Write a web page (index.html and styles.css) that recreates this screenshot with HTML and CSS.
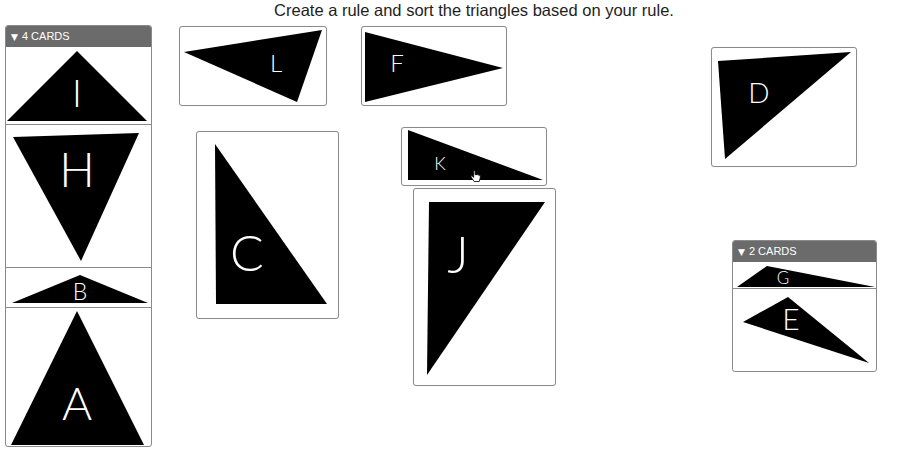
FILE: index.html
```html
<!DOCTYPE html>
<html>
<head>
<meta charset="utf-8">
<title>Triangle sort</title>
<link rel="stylesheet" href="styles.css">
</head>
<body>
<div class="board">
  <h1 class="title">Create a rule and sort the triangles based on your rule.</h1>

  <div class="stack stack-left">
    <div class="stack-head"><span class="caret">&#9660;</span>4 CARDS</div>
    <div class="slot slot-i">
      <svg width="145" height="77" viewBox="0 0 145 77"><polygon points="71,4 1,74 141,74"/><text x="71" y="60" font-size="38">I</text></svg>
    </div>
    <div class="slot slot-h">
      <svg width="145" height="142" viewBox="0 0 145 142"><polygon points="7,12 133,8 75,136"/><text x="71" y="62" font-size="47">H</text></svg>
    </div>
    <div class="slot slot-b">
      <svg width="145" height="39" viewBox="0 0 145 39"><polygon points="74,7 6,35 142,35"/><text x="74" y="32" font-size="23">B</text></svg>
    </div>
    <div class="slot slot-a">
      <svg width="145" height="138" viewBox="0 0 145 138"><polygon points="71,3 5,137 138,137"/><text x="71" y="112" font-size="46">A</text></svg>
    </div>
  </div>

  <div class="card card-l">
    <svg width="146" height="78" viewBox="1 1 146 78"><polygon points="5,26 143,4 118,76"/><text x="97" y="46" font-size="24">L</text></svg>
  </div>
  <div class="card card-f">
    <svg width="144" height="78" viewBox="1 1 144 78"><polygon points="4,6 4,76 142,42"/><text x="36" y="46" font-size="24">F</text></svg>
  </div>
  <div class="card card-c">
    <svg width="141" height="186" viewBox="1 1 141 186"><polygon points="19,13 20,173 131,173"/><text x="51" y="140" font-size="50">C</text></svg>
  </div>
  <div class="card card-k">
    <svg width="144" height="57" viewBox="1 1 144 57"><polygon points="7,3 7,53 142,53"/><text x="39" y="43" font-size="18">K</text></svg>
  </div>
  <div class="card card-j">
    <svg width="141" height="196" viewBox="1 1 141 196"><polygon points="16,14 132,14 14,187"/><text x="45" y="85" font-size="52">J</text></svg>
  </div>
  <div class="card card-d">
    <svg width="144" height="118" viewBox="1 1 144 118"><polygon points="7,14 140,5 14,112"/><text x="48" y="56" font-size="28">D</text></svg>
  </div>

  <div class="stack stack-right">
    <div class="stack-head"><span class="caret">&#9660;</span>2 CARDS</div>
    <div class="slot slot-g">
      <svg width="143" height="26" viewBox="0 0 143 26"><polygon points="34,4 4,25 142,25"/><text x="50" y="22" font-size="17">G</text></svg>
    </div>
    <div class="slot slot-e">
      <svg width="143" height="82" viewBox="0 0 143 82"><polygon points="55,8 10,33 136,74"/><text x="58" y="41" font-size="30">E</text></svg>
    </div>
  </div>

  <svg class="cursor" width="11" height="13" viewBox="0 0 12 14"><path d="M4 1 V8 L2.6 6.6 C1.8 5.8 0.6 6.8 1.3 7.7 L4.5 12.5 H10 L11.2 8.5 V6 C11.2 5.2 9.9 5.2 9.9 6 V5.5 C9.9 4.7 8.6 4.7 8.6 5.5 V5.1 C8.6 4.3 7.3 4.3 7.3 5.1 V5 H5.6 V1 C5.6 0.1 4 0.1 4 1 Z"/></svg>
</div>
</body>
</html>
```
FILE: styles.css
```css
html, body {
  margin: 0;
  padding: 0;
  background: #ffffff;
}

.board {
  position: relative;
  width: 900px;
  height: 450px;
  overflow: hidden;
  font-family: "Liberation Sans", Arial, sans-serif;
}

.title {
  margin: 0;
  padding: 1px 0 0 48px;
  font-size: 16.5px;
  font-weight: normal;
  line-height: 18px;
  color: #1e1e1e;
  text-align: center;
}

svg polygon {
  fill: #000000;
}

svg text {
  fill: #ffffff;
  font-family: "Lato", "Roboto", "Open Sans", sans-serif;
  font-weight: 300;
  text-anchor: middle;
}

.stack {
  position: absolute;
  display: flex;
  flex-direction: column;
  box-sizing: border-box;
  border: 1px solid #8a8a8a;
  border-radius: 3px;
  overflow: hidden;
  background: #ffffff;
}

.stack-left {
  left: 5px;
  top: 25px;
  width: 147px;
}

.stack-right {
  left: 732px;
  top: 240px;
  width: 145px;
}

.stack-head {
  height: 21px;
  background: #6b6b6b;
  color: #ffffff;
  font-size: 11px;
  line-height: 21px;
  padding-left: 5px;
}

.caret {
  font-family: "DejaVu Sans", sans-serif;
  font-size: 9px;
  margin-right: 4px;
}

.slot {
  display: flex;
}

.slot + .slot {
  border-top: 1px solid #8a8a8a;
}

.slot svg {
  display: block;
}

.card {
  position: absolute;
  box-sizing: border-box;
  border: 1px solid #8a8a8a;
  border-radius: 3px;
  background: #ffffff;
  box-shadow: 0 0 1px rgba(0, 0, 0, 0.15);
}

.card svg {
  display: block;
}

.card-l { left: 179px; top: 26px; width: 148px; height: 80px; }
.card-f { left: 361px; top: 26px; width: 146px; height: 80px; }
.card-c { left: 196px; top: 131px; width: 143px; height: 188px; }
.card-k { left: 401px; top: 127px; width: 146px; height: 59px; }
.card-j { left: 413px; top: 188px; width: 143px; height: 198px; }
.card-d { left: 711px; top: 47px; width: 146px; height: 120px; }

.cursor {
  position: absolute;
  left: 470px;
  top: 170px;
}

.cursor path {
  fill: #ffffff;
  stroke: #000000;
  stroke-width: 0.9;
  stroke-linejoin: round;
}
```
